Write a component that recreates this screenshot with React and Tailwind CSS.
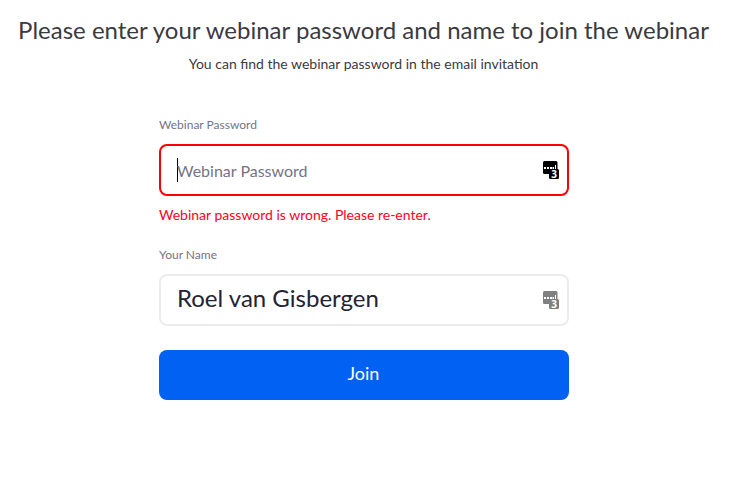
import { useState } from 'react';

const PasswordIcon = ({ color }) => (
  <svg width="17" height="19" viewBox="0 0 17 19" fill="none">
    <path d="M1.500 0h11.500a1.500 1.500 0 0 1 1.500 1.500v8H7v3.500H1.500a1.500 1.500 0 0 1-1.500-1.500v-10a1.500 1.500 0 0 1 1.500-1.500z" fill={color} />
    <path d="M7.500 8h7a1.500 1.500 0 0 1 1.500 1.500v7a1.500 1.500 0 0 1-1.500 1.500h-7a1.500 1.500 0 0 1-1.500-1.500v-7a1.500 1.500 0 0 1 1.500-1.500z" fill={color} />
    <path d="M1 6h2v2H1zM4 6h2v2H4zM7 6h2v2H7zM9.500 6h1.500v2H9.500zM12 4h1v4h-1z" fill="#fff" />
    <text x="11.200" y="17" textAnchor="middle" fontSize="10" fontWeight="700" fontFamily="Open Sans" fill="#fff">
      3
    </text>
  </svg>
);

const App = () => {
  const [password, setPassword] = useState('');
  const [name, setName] = useState('Roel van Gisbergen');

  return (
    <div className="h-screen overflow-hidden bg-white font-['Lato',sans-serif] text-[#232333]">
      <header className="w-[727px] text-center text-[#3a3a3f]">
        <h1 className="pt-[13px] text-2xl leading-[34px] whitespace-nowrap">
          Please enter your webinar password and name to join the webinar
        </h1>
        <p className="mt-[7px] text-sm leading-5">You can find the webinar password in the email invitation</p>
      </header>
      <form className="ml-[159px] mt-[42px] w-[410px]" onSubmit={(e) => e.preventDefault()}>
        <label className="block text-xs leading-[18px] text-[#747487]">Webinar Password</label>
        <div className="mt-[10px] flex h-[52px] items-center rounded-lg border-2 border-[#f00] pl-4 pr-[7px]">
          <span className="-mr-px h-6 w-px bg-black" />
          <input
            value={password}
            onChange={(e) => setPassword(e.target.value)}
            placeholder="Webinar Password"
            className="min-w-0 flex-1 pt-0.5 text-base outline-none placeholder:text-[#747487]"
          />
          <PasswordIcon color="#000" />
        </div>
        <p className="mt-[9px] text-sm leading-5 text-[#ff001f]">Webinar password is wrong. Please re-enter.</p>
        <label className="mt-[21px] block text-xs leading-[18px] text-[#747487]">Your Name</label>
        <div className="mt-[10px] flex h-[52px] items-center rounded-lg border-2 border-[#ededed] pl-4 pr-[7px]">
          <input
            value={name}
            onChange={(e) => setName(e.target.value)}
            className="min-w-0 flex-1 pb-1 text-2xl outline-none"
          />
          <PasswordIcon color="#808080" />
        </div>
        <button className="mt-6 h-[50px] w-full rounded-lg bg-[#0061f2] pr-px pb-1 text-lg text-white">Join</button>
      </form>
    </div>
  );
};

export default App;
